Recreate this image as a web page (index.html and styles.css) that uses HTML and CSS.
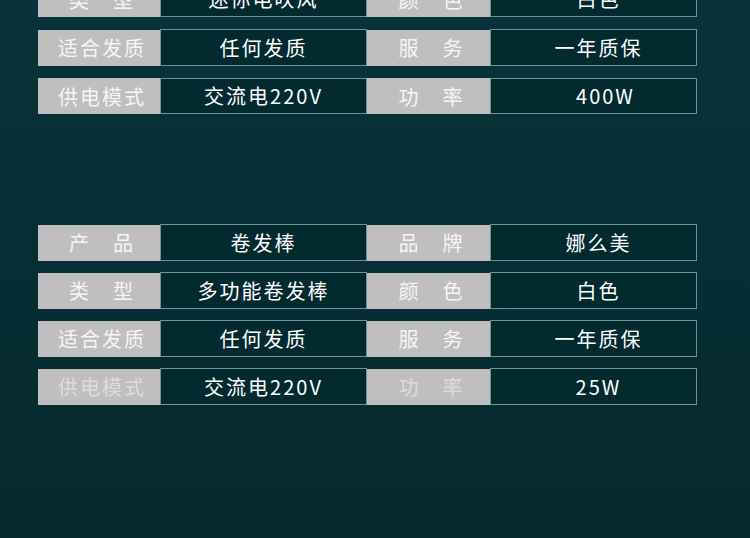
FILE: index.html
```html
<!DOCTYPE html>
<html lang="zh">
<head>
<meta charset="utf-8">
<link rel="stylesheet" href="styles.css">
</head>
<body>
<div class="page">
  <div class="spec spec-top">
    <div class="row">
      <div class="label">类　型</div><div class="value">迷你电吹风</div>
      <div class="label">颜　色</div><div class="value right">白色</div>
    </div>
    <div class="row">
      <div class="label">适合发质</div><div class="value">任何发质</div>
      <div class="label">服　务</div><div class="value right">一年质保</div>
    </div>
    <div class="row">
      <div class="label">供电模式</div><div class="value">交流电220V</div>
      <div class="label">功　率</div><div class="value right wide">400W</div>
    </div>
  </div>

  <div class="spec spec-bottom">
    <div class="row">
      <div class="label">产　品</div><div class="value">卷发棒</div>
      <div class="label">品　牌</div><div class="value right">娜么美</div>
    </div>
    <div class="row">
      <div class="label">类　型</div><div class="value">多功能卷发棒</div>
      <div class="label">颜　色</div><div class="value right">白色</div>
    </div>
    <div class="row">
      <div class="label">适合发质</div><div class="value">任何发质</div>
      <div class="label">服　务</div><div class="value right">一年质保</div>
    </div>
    <div class="row">
      <div class="label dim">供电模式</div><div class="value">交流电220V</div>
      <div class="label dim">功　率</div><div class="value right">25W</div>
    </div>
  </div>
</div>
</body>
</html>
```

FILE: styles.css
```css
html, body {
  margin: 0;
  padding: 0;
}

body {
  width: 750px;
  height: 538px;
  overflow: hidden;
  background: linear-gradient(180deg, #09333a 0%, #062e34 45%, #05292e 100%);
  font-family: "Noto Sans CJK SC", "Noto Sans", sans-serif;
}

.page {
  padding-left: 38px;
}

.spec {
  display: flex;
  flex-direction: column;
  gap: 12.5px;
  width: 659px;
}

.spec-top {
  margin-top: -19px;
}

.spec-bottom {
  margin-top: 110.5px;
  gap: 12px;
}

.row {
  display: grid;
  grid-template-columns: 122px 207px 123px 207px;
  height: 36px;
}

.label {
  background: #bfbfbf;
  color: #f6f6f6;
  font-size: 20px;
  letter-spacing: 2px;
  display: flex;
  align-items: center;
  justify-content: center;
  padding-left: 6px;
  box-sizing: border-box;
}

.label.dim {
  color: #dcdcdc;
}

.value {
  background: #032a2f;
  border: 1px solid #6c9597;
  box-sizing: border-box;
  color: #ffffff;
  font-size: 20px;
  letter-spacing: 2px;
  display: flex;
  align-items: center;
  justify-content: center;
  margin-top: -0.5px;
}

.value.right {
  padding-left: 10px;
}

.value.right.wide {
  padding-left: 24px;
}
```
